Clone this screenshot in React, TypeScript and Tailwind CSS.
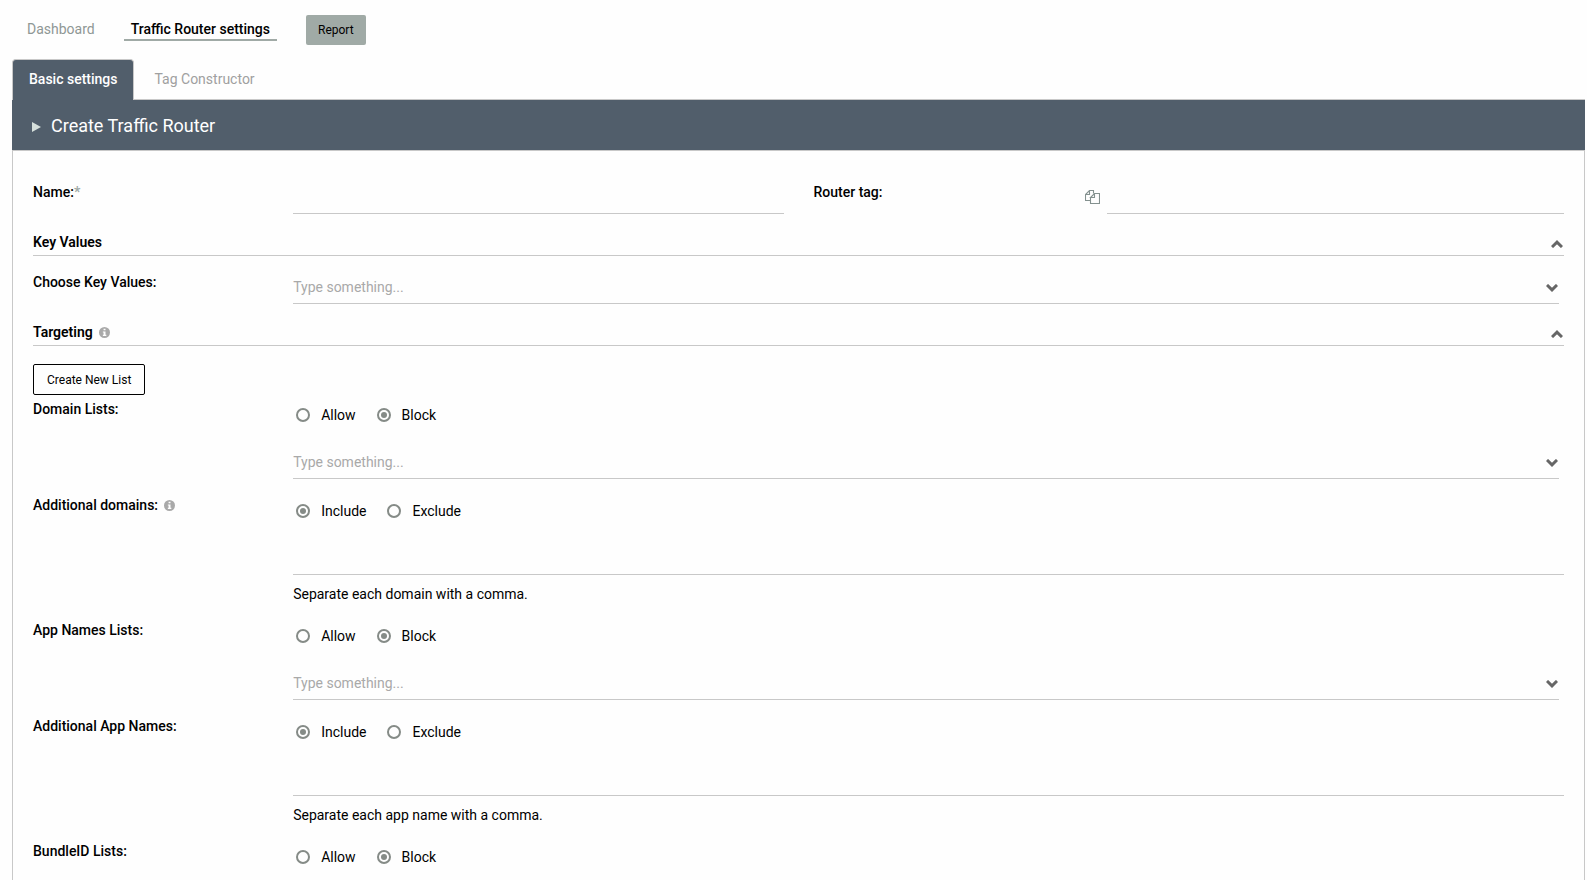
import { useId, useState, type ReactNode } from 'react';

function InfoIcon() {
  return (
    <svg viewBox="0 0 12 12" className="size-[11px] shrink-0" aria-hidden="true">
      <circle cx="6" cy="6" r="6" fill="#a9a9a9" />
      <path d="M5 1.8h2.1v1.8H5zM4.2 4.8h2.9v3.7h.9v1.3H4.2V8.5H5V6.1h-.8z" fill="#fefefe" />
    </svg>
  );
}

function CopyIcon() {
  return (
    <svg viewBox="0 0 15 15" className="h-[15px] w-[15px]" fill="none" stroke="#84918f" strokeWidth="1.1" aria-hidden="true">
      <path d="M5.5 10.5h-5v-6l4-4h4v3M4.5.5v4h-4" />
      <path d="M5.5 7.5v6h9v-10h-5l-4 4h4v-4" />
    </svg>
  );
}

function Chevron({ up = false, className = '' }: { up?: boolean; className?: string }) {
  return (
    <svg viewBox="0 0 12 8" className={className} fill="none" stroke="#666" strokeWidth="3" aria-hidden="true">
      <path d={up ? 'M1 7L6 2.2L11 7' : 'M1 1L6 5.8L11 1'} />
    </svg>
  );
}

function Row({ label, htmlFor, info, children }: { label: string; htmlFor?: string; info?: boolean; children: ReactNode }) {
  return (
    <div className="grid grid-cols-12 gap-x-[30px]">
      <div className="col-span-2 flex h-5 items-center gap-1.5 font-medium whitespace-nowrap">
        <label htmlFor={htmlFor}>{label}</label>
        {info && <InfoIcon />}
      </div>
      <div className="col-span-10">{children}</div>
    </div>
  );
}

function Combo({ id, label }: { id?: string; label?: string }) {
  return (
    <div className="mr-[5px] flex h-8 items-center border-b border-[#c8c8c8]">
      <input
        id={id}
        aria-label={label}
        role="combobox"
        aria-expanded="false"
        placeholder="Type something..."
        className="h-full min-w-0 flex-1 bg-transparent pb-0.5 outline-none placeholder:text-[#a9a9a9]"
      />
      <button type="button" aria-label="Open list" className="px-px">
        <Chevron className="h-2 w-3" />
      </button>
    </div>
  );
}

function Radios({ options, initial, label }: { options: string[]; initial: string; label: string }) {
  const name = useId();
  const [value, setValue] = useState(initial);
  return (
    <div role="radiogroup" aria-label={label} className="flex h-8 items-center gap-[21px] pl-[3px]">
      {options.map((o) => (
        <label key={o} className="flex items-center gap-[11px]">
          <input
            type="radio"
            name={name}
            checked={value === o}
            onChange={() => setValue(o)}
            className="grid size-3.5 appearance-none place-items-center rounded-full border-2 border-[#858b87] checked:before:size-1.5 checked:before:rounded-full checked:before:bg-[#858b87]"
          />
          {o}
        </label>
      ))}
    </div>
  );
}

function SectionHeader({ title, info }: { title: string; info?: boolean }) {
  return (
    <div className="mt-[18px] flex h-6 justify-between border-b border-[#c8c8c8]">
      <h2 className="flex h-5 items-center gap-1.5 font-semibold">
        {title}
        {info && <InfoIcon />}
      </h2>
      <button type="button" aria-label={'Collapse ' + title} className="flex h-6 items-center pr-px">
        <Chevron up className="h-2 w-3" />
      </button>
    </div>
  );
}

function ListRow({ label }: { label: string }) {
  return (
    <Row label={label}>
      <Radios label={label} options={['Allow', 'Block']} initial="Block" />
      <div className="mt-4">
        <Combo label={label} />
      </div>
    </Row>
  );
}

function AdditionalRow({ label, hint, info }: { label: string; hint: string; info?: boolean }) {
  const id = useId();
  return (
    <Row label={label} htmlFor={id} info={info}>
      <Radios label={label} options={['Include', 'Exclude']} initial="Include" />
      <textarea id={id} className="mt-4 block h-8 w-full resize-none border-b border-[#c8c8c8] bg-transparent outline-none" />
      <p className="mt-[9px]">{hint}</p>
    </Row>
  );
}

export default function App() {
  return (
    <div className="flex min-h-screen flex-col bg-[#fefefe] pr-0.5 pl-3 font-[Roboto,sans-serif] text-sm leading-5 text-black">
      <nav className="flex h-[59px] items-center pl-[15px]">
        <div className="flex items-center gap-[29px] pb-0.5">
          <a href="#dashboard" className="text-[#8f9795]">Dashboard</a>
          <a href="#router" className="border-b-2 border-[#a0aaa6] px-[7px] pt-0.5 font-medium">Traffic Router settings</a>
        </div>
        <button type="button" className="ml-[29px] h-[30px] rounded-xs bg-[#a0aaa6] px-3 text-xs">Report</button>
      </nav>

      <div role="tablist" className="flex h-[41px] items-stretch border-b border-[#c8c8c8]">
        <button type="button" role="tab" aria-selected="true" className="-mb-px rounded-t border border-b-0 border-[#c8c8c8] bg-[#515e6b] px-4 pb-0.5 font-medium text-white">
          Basic settings
        </button>
        <button type="button" role="tab" aria-selected="false" className="px-5 text-[#a0a0a0]">
          Tag Constructor
        </button>
      </div>

      <header className="flex h-[50px] items-center gap-2.5 bg-[#515e6b] pt-0.5 pl-5 text-white">
        <svg viewBox="0 0 9 10" className="mt-0.5 h-2.5 w-[9px]" aria-hidden="true">
          <path d="M0 0L9 5L0 10z" fill="#d5dfdb" />
        </svg>
        <h1 className="text-lg">Create Traffic Router</h1>
      </header>

      <main className="flex flex-1 flex-col border border-b-0 border-[#c8c8c8] px-5 pt-[31px]">
        <div className="grid grid-cols-12 gap-x-[30px]">
          <label htmlFor="name" className="col-span-2 font-medium">
            Name:<span className="font-bold text-[#a0aaa6]">*</span>
          </label>
          <input id="name" className="col-span-4 h-8 min-w-0 border-b border-[#c8c8c8] bg-transparent outline-none" />
          <label htmlFor="tag" className="col-span-2 font-medium">Router tag:</label>
          <div className="col-span-4 flex items-center gap-[7px] pl-[11px]">
            <button type="button" aria-label="Copy router tag" className="pb-0.5"><CopyIcon /></button>
            <input id="tag" readOnly className="h-8 min-w-0 flex-1 border-b border-[#c8c8c8] bg-transparent outline-none" />
          </div>
        </div>

        <SectionHeader title="Key Values" />
        <div className="mt-4">
          <Row label="Choose Key Values:" htmlFor="key-values">
            <Combo id="key-values" />
          </Row>
        </div>

        <SectionHeader title="Targeting" info />
        <button type="button" className="mt-[18px] h-[31px] self-start rounded-xs border border-black px-[13px] text-xs">
          Create New List
        </button>
        <div className="mt-1 flex flex-col gap-4">
          <ListRow label="Domain Lists:" />
          <AdditionalRow label="Additional domains:" hint="Separate each domain with a comma." info />
          <ListRow label="App Names Lists:" />
          <AdditionalRow label="Additional App Names:" hint="Separate each app name with a comma." />
          <Row label="BundleID Lists:">
            <Radios label="BundleID Lists:" options={['Allow', 'Block']} initial="Block" />
          </Row>
        </div>
      </main>
    </div>
  );
}
